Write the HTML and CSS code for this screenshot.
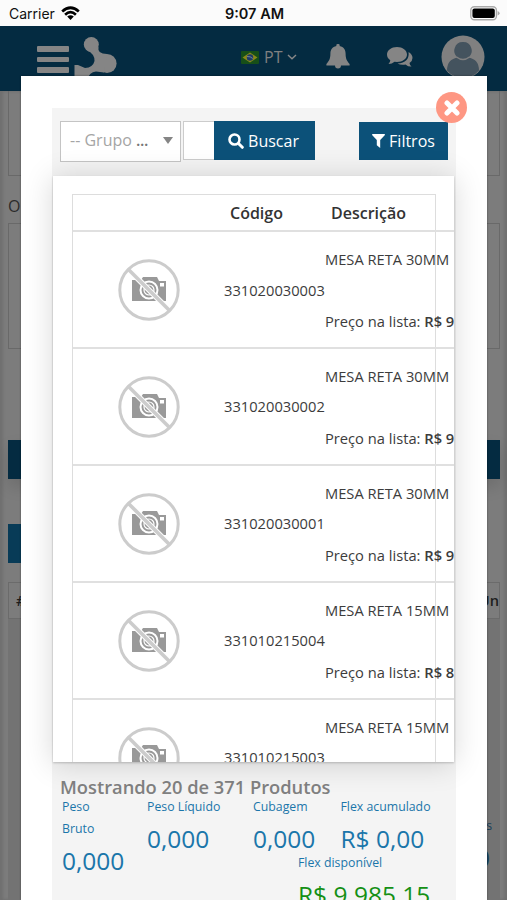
FILE: index.html
```html
<!DOCTYPE html>
<html lang="pt-BR">
<head>
    <meta charset="UTF-8">
    <meta name="viewport" content="width=device-width, initial-scale=1.0">
    <title>Produtos</title>
    <link rel="stylesheet" href="styles.css">
</head>
<body>
    <svg class="symbols" width="0" height="0">
        <symbol id="no-photo" viewBox="0 0 62 62">
            <path fill="#999" d="M14 21h9l2-3h14l2 4h7v20H14z"/>
            <circle cx="31" cy="31" r="8.5" fill="none" stroke="#fff" stroke-width="2"/>
            <circle cx="31" cy="31" r="5" fill="none" stroke="#fff" stroke-width="1.2"/>
            <rect x="42" y="24" width="4" height="3.5" fill="#fff"/>
            <path stroke="#fff" stroke-width="5.5" d="M12 12l38 38"/>
            <path stroke="#ccc" stroke-width="3.6" d="M10 10l42 42"/>
            <circle cx="31" cy="31" r="29.2" fill="none" stroke="#ccc" stroke-width="3"/>
        </symbol>
    </svg>

    <div class="status-bar">
        <div class="carrier">
            <span>Carrier</span>
            <svg width="19" height="15" viewBox="0 0 19 15">
                <g fill="none" stroke="#000" stroke-width="2.7">
                    <path d="M1.2 5.5Q9.5-2 17.8 5.5"/>
                    <path d="M4.1 8.7Q9.5 3.7 14.9 8.7"/>
                </g>
                <path d="M6.2 10.6Q9.5 7.9 12.8 10.6L9.5 14z"/>
            </svg>
        </div>
        <div class="time">9:07 AM</div>
        <div class="battery">
            <svg width="30" height="15" viewBox="0 0 30 15">
                <rect x=".8" y=".8" width="25.6" height="13" rx="3.5" fill="#fff" stroke="#aaa" stroke-width="1.4"/>
                <rect x="2.4" y="2.5" width="22.4" height="9.6" rx="2"/>
                <path fill="#aaa" d="M27.6 5q2 .8 2 2.3t-2 2.3z"/>
            </svg>
        </div>
    </div>

    <header class="header">
        <div class="menu"><span></span><span></span><span></span></div>
        <svg class="logo" width="44" height="42" viewBox="0 0 44 42">
            <circle cx="17.3" cy="7.5" r="7.5"/>
            <circle cx="33" cy="26.5" r="9.6"/>
            <path d="M12 12.500Q21 17 20.500 24 19 30.500 11 31L4 28H.5v14H14q1-7 8-7.500l8 1L33 17q-10 0-8.500-7z"/>
        </svg>
        <div class="lang">
            <svg width="18" height="13" viewBox="0 0 18 13">
                <rect width="18" height="13" rx="1" fill="#174f18"/>
                <path fill="#8a881b" d="M9 1.500L16.500 6.500 9 11.500 1.500 6.500z"/>
                <circle cx="9" cy="6.500" r="3.200" fill="#1d3a67"/>
                <path fill="none" stroke="#8994a0" stroke-width=".8" d="M6 5.500q3.500-.3 5.800 2"/>
            </svg>
            <span>PT</span>
            <svg width="10" height="6" viewBox="0 0 10 6"><path fill="none" stroke="#888" stroke-width="1.400" d="M1 1l4 3.800L9 1"/></svg>
        </div>
        <svg class="bell" width="24" height="25" viewBox="0 0 24 25">
            <path d="M12 0a1.600 1.600 0 0 1 1.600 2c4.200.8 6 4 6 7.500 0 5.500 1.400 7.500 4 10.500v1.500H.4V20c2.600-3 4-5 4-10.500 0-3.500 1.800-6.700 6-7.500A1.600 1.600 0 0 1 12 0zM9 21.500h6a3 3 0 0 1-6 0z"/>
        </svg>
        <svg class="chat" width="26" height="21" viewBox="0 0 26 21">
            <path d="M10 0c5.600 0 10 3.300 10 7.500S15.600 15 10 15l-2.500-.2Q5 17 1.500 17q1.600-1.500 1.800-3.800Q0 11 0 7.500C0 3.300 4.400 0 10 0z"/>
            <path d="M21.600 5Q25.500 7.300 25.500 11q0 3-3 5 .2 2 2 3.600-3.300.2-6-2.200-4.600.8-8-1Q22.500 16 21.600 5z"/>
        </svg>
        <svg class="avatar" width="44" height="44" viewBox="0 0 44 44">
            <circle cx="22" cy="22" r="21.500" fill="#808080"/>
            <path fill="#44535e" d="M22 7a8.500 8.500 0 0 1 5 15.500q11 1.500 11 13A21 21 0 0 1 6 35.500q0-11.500 11-13A8.500 8.500 0 0 1 22 7z"/>
            <path fill="none" stroke="#808080" stroke-width="1.500" d="M15.500 22q6.500 5 13 0"/>
        </svg>
    </header>

    <main class="page">
        <div class="field field-first"></div>
        <div class="label">Observação</div>
        <div class="field field-notes"></div>
        <div class="bar bar-dark"></div>
        <div class="bar bar-blue"></div>
        <div class="grid-head"><span>#</span><span>Un</span></div>
        <div class="totals"><small>s</small><strong>0</strong></div>
    </main>

    <div class="modal">
        <button class="close">
            <svg width="16" height="16" viewBox="0 0 16 16"><path stroke="#fff" stroke-width="5" stroke-linecap="round" d="M3 3l10 10M13 3L3 13"/></svg>
        </button>
        <div class="panel">
            <div class="toolbar">
                <div class="select"><span>-- Grupo <b>...</b></span><i></i></div>
                <div class="search"></div>
                <button class="btn btn-search">
                    <svg width="16" height="16" viewBox="0 0 16 16"><circle cx="6.500" cy="6.500" r="5" fill="none" stroke="#fff" stroke-width="2.600"/><path stroke="#fff" stroke-width="3" stroke-linecap="round" d="M10.500 10.500l3.800 3.800"/></svg>
                    Buscar
                </button>
                <button class="btn btn-filter">
                    <svg width="13" height="14" viewBox="0 0 13 14"><path fill="#fff" d="M.5 0h12q.8.500.2 1.200L8.200 6v8L4.800 11.200V6L.3 1.200Q-.2.500.500 0z"/></svg>
                    Filtros
                </button>
            </div>
            <div class="list">
                <div class="table">
                    <div class="row row-head">
                        <span></span><span>Código</span><span>Descrição</span>
                    </div>
                    <div class="row">
                        <svg class="photo"><use href="#no-photo"/></svg>
                        <span>331020030003</span>
                        <div class="desc"><p>MESA RETA 30MM</p><p>Preço na lista: <b>R$ 9</b></p></div>
                    </div>
                    <div class="row">
                        <svg class="photo"><use href="#no-photo"/></svg>
                        <span>331020030002</span>
                        <div class="desc"><p>MESA RETA 30MM</p><p>Preço na lista: <b>R$ 9</b></p></div>
                    </div>
                    <div class="row">
                        <svg class="photo"><use href="#no-photo"/></svg>
                        <span>331020030001</span>
                        <div class="desc"><p>MESA RETA 30MM</p><p>Preço na lista: <b>R$ 9</b></p></div>
                    </div>
                    <div class="row">
                        <svg class="photo"><use href="#no-photo"/></svg>
                        <span>331010215004</span>
                        <div class="desc"><p>MESA RETA 15MM</p><p>Preço na lista: <b>R$ 8</b></p></div>
                    </div>
                    <div class="row">
                        <svg class="photo"><use href="#no-photo"/></svg>
                        <span>331010215003</span>
                        <div class="desc"><p>MESA RETA 15MM</p></div>
                    </div>
                </div>
            </div>
            <div class="summary">
                <h2>Mostrando 20 de 371 Produtos</h2>
                <div class="stats">
                    <div class="stat"><small>Peso<br>Bruto</small><strong>0,000</strong></div>
                    <div class="stat"><small>Peso Líquido</small><strong>0,000</strong></div>
                    <div class="stat"><small>Cubagem</small><strong>0,000</strong></div>
                    <div class="stat"><small>Flex acumulado</small><strong>R$ 0,00</strong></div>
                </div>
                <div class="stat available"><small>Flex disponível</small><strong>R$ 9.985,15</strong></div>
            </div>
        </div>
    </div>
</body>
</html>
```

FILE: styles.css
```css
* {
    box-sizing: border-box;
}

body {
    position: relative;
    height: 900px;
    margin: 0;
    overflow: hidden;
    background-color: #7c7c7c;
    color: #3c3c3c;
    font-family: "Open Sans", sans-serif;
    font-size: 14.7px;
}

p, h2 {
    margin: 0;
}

svg {
    display: block;
    flex-shrink: 0;
}

.symbols {
    position: absolute;
}

/* status bar */
.status-bar {
    display: grid;
    grid-template-columns: 1fr auto 1fr;
    align-items: center;
    height: 26px;
    padding: 1px 7px 0 9px;
    background-color: #fbfbfb;
    color: #111;
    font-family: Inter, sans-serif;
    font-size: 14px;
}

.carrier {
    display: flex;
    align-items: center;
    gap: 6px;
}

.time {
    font-weight: 600;
    font-size: 14.5px;
}

.battery {
    justify-self: end;
}

/* header */
.header {
    display: flex;
    align-items: flex-start;
    height: 65px;
    padding: 9px 0 0 37px;
    background-color: #042b41;
    fill: #858585;
}

.menu {
    display: flex;
    flex-direction: column;
    gap: 5px;
    width: 32px;
    margin-top: 11px;
}

.menu span {
    height: 5.5px;
    border-radius: 1px;
    background-color: #858585;
}

.logo {
    margin: 2px 0 0 5px;
}

.lang {
    display: flex;
    align-items: center;
    gap: 5px;
    width: 56px;
    margin: 11px 0 0 123px;
    color: #808080;
    font-size: 16px;
    line-height: 22px;
}

.bell {
    margin: 9px 0 0 29px;
}

.chat {
    margin: 12px 0 0 37px;
}

.avatar {
    margin-left: 28px;
}

/* form behind the modal */
.page {
    height: 809px;
    padding: 0 7px 0 8px;
    box-shadow: inset 3px 0 3px #707070, inset -3px 0 3px #707070;
}

.field {
    border: 1px solid #696969;
}

.field-first {
    height: 85px;
    border-top: none;
}

.label {
    height: 47px;
    padding-top: 18px;
    color: #2b2b2b;
    font-size: 16px;
    line-height: 24px;
}

.field-notes {
    height: 126px;
}

.bar {
    height: 39px;
}

.bar-dark {
    margin-top: 91px;
    background-color: #042b41;
    box-shadow: 0 8px 16px rgba(0, 0, 0, 0.12);
}

.bar-blue {
    width: 200px;
    margin-top: 45px;
    background-color: #083b57;
}

.grid-head {
    display: flex;
    justify-content: space-between;
    height: 37px;
    margin-top: 19px;
    padding: 0 0 0 7px;
    border: 1px solid #6b6b6b;
    color: #1d1d1d;
    font-size: 14.7px;
    font-weight: 600;
    line-height: 35px;
}

.totals {
    display: flex;
    flex-direction: column;
    align-items: flex-end;
    height: 281px;
    padding: 197px 8px 0 0;
    background-color: #737373;
    color: #173e58;
}

.totals small {
    font-size: 12.3px;
    line-height: 20px;
}

.totals strong {
    margin-right: 2px;
    font-size: 24.5px;
    font-weight: 400;
    line-height: 44px;
}

/* modal */
.modal {
    position: absolute;
    top: 76px;
    left: 21px;
    width: 466px;
    height: 824px;
    padding: 32px 31px 0;
    background-color: #fff;
    box-shadow: 0 0 2px rgba(0, 0, 0, 0.4);
}

.close {
    position: absolute;
    top: 16px;
    right: 20px;
    z-index: 2;
    display: flex;
    align-items: center;
    justify-content: center;
    width: 31px;
    height: 31px;
    padding: 0;
    border: none;
    border-radius: 50%;
    background-color: #fe9783;
}

.panel {
    height: 792px;
    background-color: #f4f4f4;
}

.toolbar {
    display: flex;
    height: 68px;
    padding: 13px 8px 0;
}

.select {
    display: flex;
    align-items: center;
    justify-content: space-between;
    width: 121px;
    height: 41px;
    padding: 0 7px 3px 9px;
    border: 1px solid #c4c4c4;
    background-color: #fff;
    color: #a5a5a5;
    font-size: 16px;
    white-space: nowrap;
}

.select b {
    color: #777;
    font-weight: 600;
    letter-spacing: -0.4px;
}

.select i {
    border: 5px solid transparent;
    border-top: 7px solid #858585;
    border-bottom: none;
}

.search {
    width: 31px;
    height: 39px;
    margin-left: 2px;
    border: 1px solid #ccc;
    border-right: none;
    background-color: #fff;
}

.btn {
    display: flex;
    align-items: center;
    justify-content: center;
    height: 39px;
    padding: 0;
    border: none;
    background-color: #0c5179;
    color: #fff;
    font-family: inherit;
    font-size: 16px;
}

.btn-search {
    gap: 4px;
    width: 101px;
    padding-right: 2px;
}

.btn-filter {
    gap: 4px;
    width: 89px;
    height: 38px;
    margin: 1px 0 0 44px;
}

.list {
    position: relative;
    width: 401px;
    height: 586px;
    margin-left: 1px;
    padding: 18px 0 0 19px;
    background-color: #fff;
    box-shadow: 0 1px 2px rgba(0, 0, 0, 0.2), 0 2px 28px rgba(0, 0, 0, 0.16);
    overflow: hidden;
}

.table {
    width: 364px;
    height: 620px;
    border: 1px solid #ddd;
}

.row {
    display: grid;
    grid-template-columns: 151px 101px 130px;
    align-items: center;
    width: 383px;
    height: 116.9px;
    border-bottom: 2px solid #e0e0e0;
    white-space: nowrap;
}

.row > span {
    padding-bottom: 1px;
}

.row-head {
    height: 37px;
    color: #333;
    font-size: 16px;
    font-weight: 600;
}

.row-head span {
    padding: 0 0 0 6px;
}

.photo {
    width: 62px;
    height: 62px;
    margin-left: 45px;
}

.desc {
    display: flex;
    flex-direction: column;
    gap: 42px;
    height: 116px;
    padding-top: 17px;
    line-height: 20px;
}

.desc b {
    font-weight: 600;
}

/* totals */
.summary {
    padding: 14px 8px 0;
    color: #1b76aa;
}

.summary h2 {
    color: #808080;
    font-size: 18.3px;
    font-weight: 600;
    line-height: 22px;
}

.stats {
    display: grid;
    grid-template-columns: 85px 106px 87.5px 110px;
    padding-left: 2px;
}

.stat small {
    display: block;
    margin-top: -2px;
    font-size: 12.3px;
    line-height: 22px;
}

.stat strong {
    display: block;
    font-size: 24.5px;
    font-weight: 400;
    line-height: 42px;
}

.available {
    margin: -30px 0 0 238px;
}

.available strong {
    color: #159015;
}
```
